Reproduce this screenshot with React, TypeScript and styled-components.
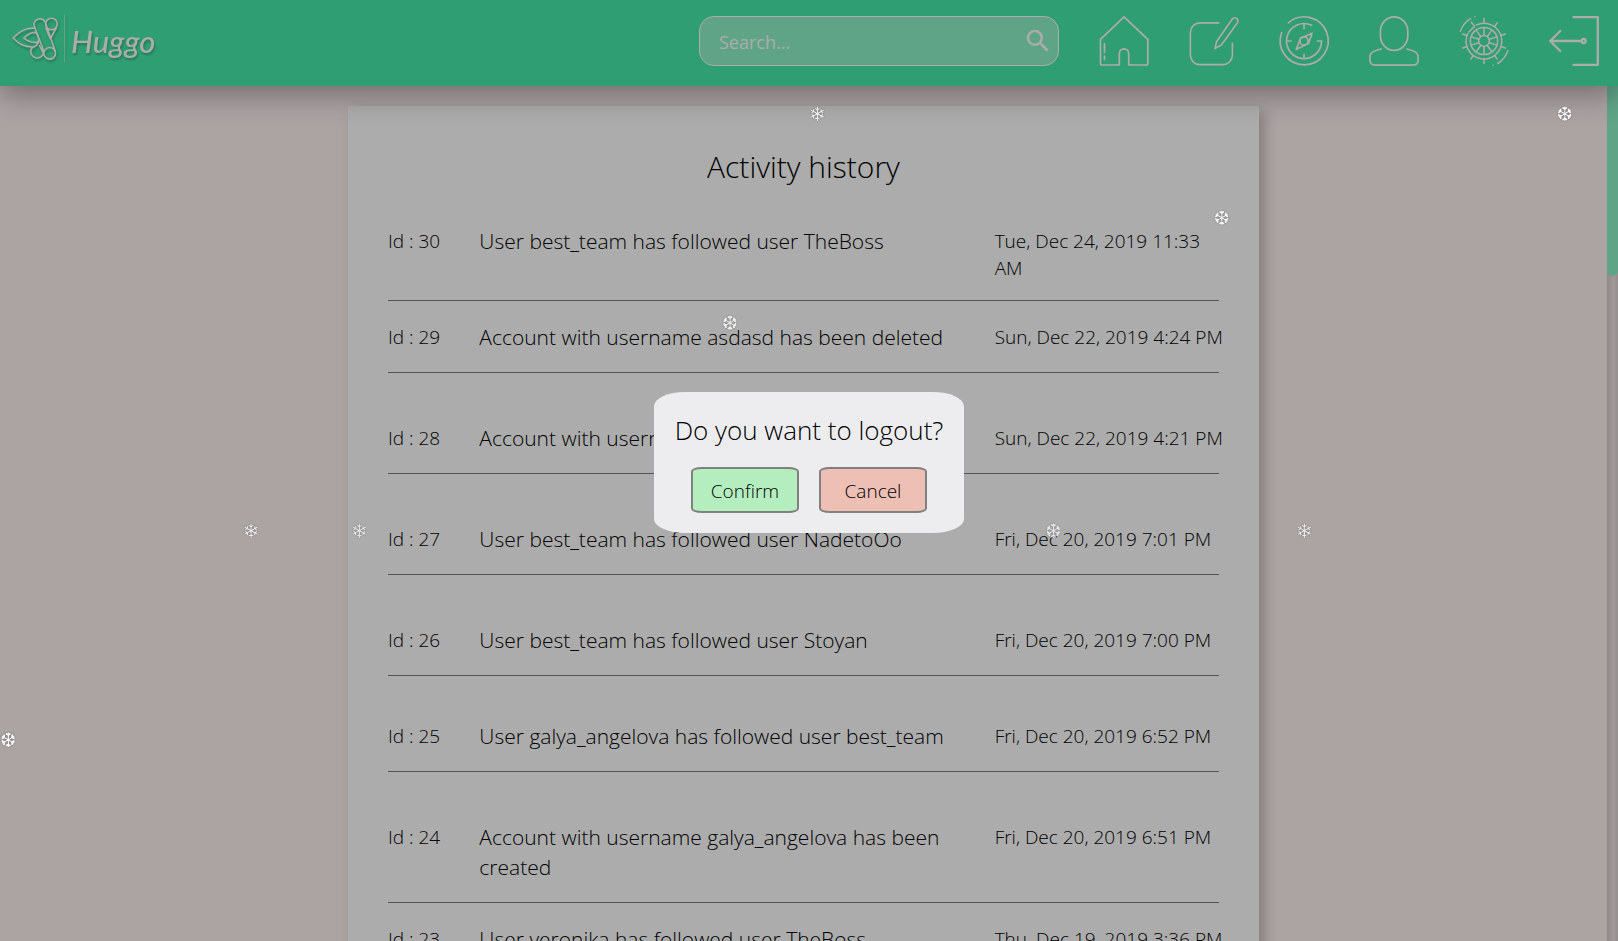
import React from "react";
import styled, { createGlobalStyle } from "styled-components";
import { MdSearch } from "react-icons/md";

const GlobalStyle = createGlobalStyle`
  *, *::before, *::after { box-sizing: border-box; }
  body {
    margin: 0;
    background: #aca3a3;
    color: #000;
    font-family: "Segoe UI", "Open Sans", "Noto Sans", sans-serif;
    font-weight: 300;
  }
`;

const Page = styled.div`
  display: flex;
  flex-direction: column;
  height: 100vh;
  overflow: hidden;
`;

const Header = styled.header`
  display: flex;
  flex: none;
  align-items: center;
  height: 86px;
  padding: 0 19px 4px 12px;
  background: #309e73;
  box-shadow: 0 8px 30px rgba(0, 0, 0, 0.35);
  color: #acacac;
  position: relative;
  z-index: 1;
`;

const Brand = styled.a`
  display: flex;
  align-items: center;
  gap: 6px;
  margin-right: auto;
  color: inherit;
  text-decoration: none;
  filter: drop-shadow(1px 2px 1px rgba(0, 0, 0, 0.25));
`;

const BrandName = styled.span`
  font-family: Lato, sans-serif;
  font-size: 31px;
  font-style: italic;
  font-weight: 500;
  line-height: 40px;
`;

const SearchBox = styled.form`
  display: flex;
  align-items: center;
  width: 360px;
  height: 50px;
  margin-right: 40px;
  padding: 0 5px 0 19px;
  border: 1px solid #acacac;
  border-radius: 15px;
  background: #60a488;
`;

const SearchInput = styled.input`
  flex: 1;
  min-width: 0;
  padding: 2px 0 0;
  border: 0;
  outline: 0;
  background: transparent;
  color: #acacac;
  font: 400 18px "Segoe UI", "Open Sans", sans-serif;
  &::placeholder { color: #acacac; opacity: 1; }
`;

const SearchButton = styled.button`
  display: flex;
  padding: 0;
  border: 0;
  background: none;
  color: #acacac;
  font-size: 30px;
`;

const Nav = styled.nav`
  display: flex;
  gap: 40px;
`;

const NavLink = styled.a`
  display: block;
  width: 50px;
  height: 50px;
  color: #acacac;
`;

const Icon = styled.svg<{ $weight?: number }>`
  display: block;
  overflow: visible;
  fill: none;
  stroke: currentColor;
  stroke-width: ${(p) => p.$weight ?? 1.6};
  stroke-linecap: round;
  stroke-linejoin: round;
`;

const Body = styled.div`
  display: flex;
  flex: 1;
  min-height: 0;
`;

const Main = styled.main`
  flex: 1;
  padding-top: 20px;
  overflow: hidden;
`;

const ScrollTrack = styled.div`
  width: 11px;
  background: linear-gradient(90deg, #8f8888, #a29a9a 60%, #958e8e);
`;

const ScrollThumb = styled.div`
  height: 190px;
  border-radius: 0 0 6px 6px;
  background: #60a488;
`;

const Card = styled.section`
  width: 56.7%;
  min-height: 100%;
  margin: 0 auto;
  padding: 40px 40px 0;
  background: #acacac;
  box-shadow: 6px 6px 12px rgba(0, 0, 0, 0.22);
`;

const Title = styled.h1`
  margin: 0 0 38px;
  font-size: 30px;
  font-weight: 300;
  line-height: 42px;
  text-align: center;
`;

const List = styled.ol`
  margin: 0;
  padding: 0;
  list-style: none;
`;

const Row = styled.li<{ $space: number }>`
  display: grid;
  grid-template-columns: 11% 62% 29%;
  padding: ${(p) => p.$space}px 0 20px;
  border-bottom: 1px solid #555;
`;

const Small = styled.span`
  margin: 2px 0 -2px;
  font-size: 19px;
  line-height: 27px;
`;

const When = styled(Small).attrs({ as: "time" })`
  padding-right: 5px;
`;

const Message = styled.span`
  font-size: 21px;
  line-height: 30px;
`;

const Overlay = styled.div`
  position: fixed;
  inset: 0;
  z-index: 3;
  display: grid;
  place-items: center;
  padding-bottom: 16px;
`;

const Dialog = styled.div`
  padding: 20px 21px;
  border-radius: 10%;
  background: #ededef;
  text-align: center;
`;

const Question = styled.h2`
  margin: 0 0 18px;
  font-size: 26px;
  font-weight: 300;
  line-height: 37px;
`;

const Actions = styled.div`
  display: flex;
  justify-content: center;
  gap: 20px;
`;

const ActionButton = styled.button<{ $tone: string }>`
  width: 108px;
  height: 46px;
  padding: 2px 0 0;
  border: 2px solid #808080;
  border-radius: 10%;
  background: ${(p) => p.$tone};
  color: #000;
  font: 300 19px "Segoe UI", "Open Sans", sans-serif;
`;

const Snow = styled.div`
  position: fixed;
  inset: 0;
  z-index: 2;
  overflow: hidden;
  pointer-events: none;
`;

const Flake = styled.span<{ $x: number; $y: number; $alpha: number }>`
  position: absolute;
  left: ${(p) => p.$x}%;
  top: ${(p) => p.$y}px;
  color: #fff;
  opacity: ${(p) => p.$alpha};
  font: 20px/16px "DejaVu Sans", sans-serif;
  text-shadow: 0 0 1px #000;
`;

const spin = (step: number, count: number) =>
  Array.from({ length: count }, (_, i) => `rotate(${i * step} 25 25)`);

const HomeIcon = () => (
  <Icon width="50" height="50" viewBox="0 0 50 50" $weight={1.7}>
    <path d="M25 .9 48.8 23.4V48q0 1-1 1H29.7V37.5a4.7 4.7 0 0 0-9.4 0V49H2.5q-1 0-1-1V23.4Z" />
    <path d="M5.5 27.5v9M5.5 40v3.5" />
  </Icon>
);

const EditIcon = () => (
  <Icon width="50" height="50" viewBox="0 0 50 50" $weight={1.6}>
    <path d="M29.8 6.9H11A9.5 9.5 0 0 0 1.4 16.4V39A9.5 9.5 0 0 0 11 48.6H34A9.5 9.5 0 0 0 43.4 39V27.3" />
    <path d="M26 32.5 27.6 25.5 43.5 2.8A3.2 3.2 0 0 1 48.6 6.5L32.6 28.7Z" />
  </Icon>
);

const CompassIcon = () => (
  <Icon width="50" height="50" viewBox="0 0 50 50" $weight={1.7}>
    <path d="M9.4 6.8A24 24 0 1 1 2.7 16.5" />
    <path d="M32.6 9.3A17.5 17.5 0 1 0 42.5 25.4" />
    <path d="M25 8v4.5M25 38.5V42M8 25h4M38.5 25H42.5" />
    <path d="M33 17.2 29.6 27.3 17.2 33.4 21.6 22.2Z" />
    <circle cx="25" cy="25" r="4.2" />
  </Icon>
);

const UserIcon = () => (
  <Icon width="50" height="50" viewBox="0 0 50 50" $weight={1.7}>
    <rect x="11.4" y=".9" width="27.4" height="33.4" rx="13.7" ry="14.5" />
    <path d="M12.2 33C5 34.5.9 36.5.9 40.5v3.2q0 5.4 5.4 5.4H43.7q5.4 0 5.4-5.4V40.5C49.1 36.5 45 34.5 38 33" />
  </Icon>
);

const WheelIcon = () => (
  <Icon width="50" height="50" viewBox="0 0 50 50" $weight={1.5}>
    <circle cx="25" cy="25" r="5.4" />
    <circle cx="25" cy="25" r="13.6" />
    <path d="M17.4 9A17.8 17.8 0 1 1 8.8 17.6" />
    <path d="M9.8 16 15.6 10.4 12.3 6.3" />
    {spin(36, 10).map((t) => (
      <path key={t} d="M25 19.4V11.6" transform={t} />
    ))}
    {spin(36, 9).map((t) => (
      <path key={t} d="M25 7V2.6" transform={t} />
    ))}
    <path d="M1.3 15.3A25.6 25.6 0 0 1 11.5 2.6M48.9 34.7A25.6 25.6 0 0 1 38.7 47.5" />
    <path d="M15.8.7h.1M34.2 49.2h.1" />
  </Icon>
);

const LogoutIcon = () => (
  <Icon width="50" height="50" viewBox="0 0 50 50" $weight={2.3}>
    <path d="M24.5 1.2H48.8V48.8H24.5" />
    <path d="M32 25H1.2M11.3 15 1.2 25 11.3 35" />
    <circle cx="34.7" cy="25" r="2" />
  </Icon>
);

const LogoMark = () => (
  <Icon width="53" height="48" viewBox="0 0 53 48" aria-hidden="true" $weight={1.6}>
    <path d="M32 34.5 22.2 9A5.9 5.9 0 0 1 33 4.6L43.3 34.5" />
    <circle cx="37.7" cy="36.3" r="5.8" />
    <circle cx="39.4" cy="7" r="5.8" />
    <path d="M27.5 28.5 31.5 36.3A6.2 6.2 0 1 1 19 32.5Q19.5 31 21.5 30" />
    <path d="M22.8 11.2C13 10.5 7 15 1.1 21 7 27 12 30.2 21.5 30Q24.5 29 26.5 25.5" />
    <path d="M23 15.3C18.5 15.5 15 18 12 21 16 25 19.5 26 26.3 25.2Q28 19 23 15.3Z" />
    <path d="M34 11.5 38.3 21.8 44.2 11" />
    <path d="M52.5-2V45" opacity=".4" strokeWidth="1" />
  </Icon>
);

const links = [
  { label: "Home", icon: <HomeIcon /> },
  { label: "New post", icon: <EditIcon /> },
  { label: "Explore", icon: <CompassIcon /> },
  { label: "Profile", icon: <UserIcon /> },
  { label: "Settings", icon: <WheelIcon /> },
  { label: "Logout", icon: <LogoutIcon /> },
];

const activity = [
  { id: 30, text: "User best_team has followed user TheBoss", date: "Tue, Dec 24, 2019 11:33 AM", space: 0 },
  { id: 29, text: "Account with username asdasd has been deleted", date: "Sun, Dec 22, 2019 4:24 PM", space: 21 },
  { id: 28, text: "Account with username asdasd has been created", date: "Sun, Dec 22, 2019 4:21 PM", space: 50 },
  { id: 27, text: "User best_team has followed user NadetoOo", date: "Fri, Dec 20, 2019 7:01 PM", space: 50 },
  { id: 26, text: "User best_team has followed user Stoyan", date: "Fri, Dec 20, 2019 7:00 PM", space: 50 },
  { id: 25, text: "User galya_angelova has followed user best_team", date: "Fri, Dec 20, 2019 6:52 PM", space: 45 },
  { id: 24, text: "Account with username galya_angelova has been created", date: "Fri, Dec 20, 2019 6:51 PM", space: 50 },
  { id: 23, text: "User veronika has followed user TheBoss", date: "Thu, Dec 19, 2019 3:36 PM", space: 21 },
];

const flakes = [
  { x: 50, y: 106, glyph: "❄", alpha: 0.85 },
  { x: 96.2, y: 106, glyph: "❆", alpha: 0.95 },
  { x: 75, y: 210, glyph: "❆", alpha: 0.9 },
  { x: 44.6, y: 315, glyph: "❆", alpha: 0.8 },
  { x: 15, y: 523, glyph: "❄", alpha: 0.8 },
  { x: 21.7, y: 523, glyph: "❄", alpha: 0.7 },
  { x: 64.6, y: 523, glyph: "❆", alpha: 0.7 },
  { x: 80.1, y: 523, glyph: "❄", alpha: 0.75 },
  { x: 0, y: 732, glyph: "❆", alpha: 1 },
];

export default function App() {
  return (
    <Page>
      <GlobalStyle />
      <Header>
        <Brand href="#">
          <LogoMark />
          <BrandName>Huggo</BrandName>
        </Brand>
        <SearchBox role="search">
          <SearchInput type="text" placeholder="Search..." aria-label="Search" />
          <SearchButton type="button" aria-label="Submit search">
            <MdSearch />
          </SearchButton>
        </SearchBox>
        <Nav>
          {links.map((l) => (
            <NavLink key={l.label} href="#" aria-label={l.label}>
              {l.icon}
            </NavLink>
          ))}
        </Nav>
      </Header>
      <Body>
        <Main>
          <Card>
            <Title>Activity history</Title>
            <List>
              {activity.map((a) => (
                <Row key={a.id} $space={a.space}>
                  <Small>Id : {a.id}</Small>
                  <Message>{a.text}</Message>
                  <When>{a.date}</When>
                </Row>
              ))}
            </List>
          </Card>
        </Main>
        <ScrollTrack>
          <ScrollThumb />
        </ScrollTrack>
      </Body>
      <Snow aria-hidden="true">
        {flakes.map((f) => (
          <Flake key={`${f.x}-${f.y}`} $x={f.x} $y={f.y} $alpha={f.alpha}>
            {f.glyph}
          </Flake>
        ))}
      </Snow>
      <Overlay>
        <Dialog role="dialog" aria-modal="true" aria-labelledby="logout-question">
          <Question id="logout-question">Do you want to logout?</Question>
          <Actions>
            <ActionButton type="button" $tone="#b5eebe">Confirm</ActionButton>
            <ActionButton type="button" $tone="#edbfb5">Cancel</ActionButton>
          </Actions>
        </Dialog>
      </Overlay>
    </Page>
  );
}
